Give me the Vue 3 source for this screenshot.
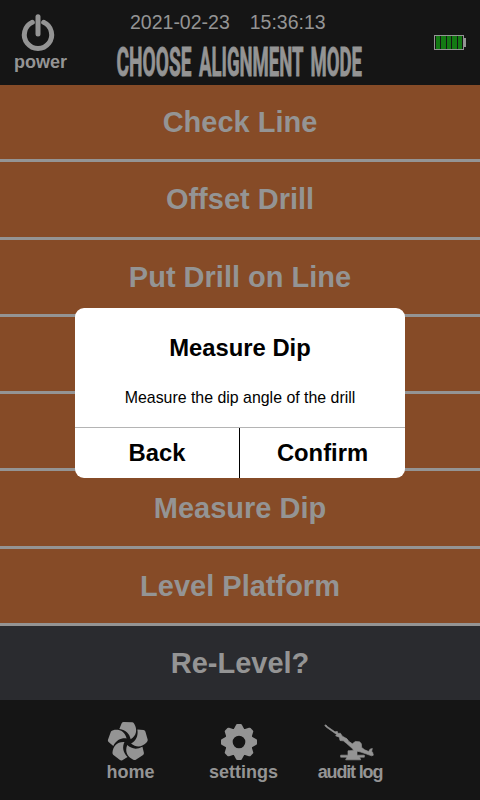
<script setup>
const modes = [
  { id: 1, label: 'Check Line' },
  { id: 2, label: 'Offset Drill' },
  { id: 3, label: 'Put Drill on Line' },
  { id: 4, label: '' },
  { id: 5, label: '' },
  { id: 6, label: 'Measure Dip' },
  { id: 7, label: 'Level Platform' },
  { id: 8, label: 'Re-Level?', dark: true },
]
const petals = [0, 72, 144, 216, 288]
const teeth = [0, 45, 90, 135, 180, 225, 270, 315]
</script>

<template>
  <div class="screen">
    <header class="header">
      <button class="power">
        <svg class="power-icon" viewBox="0 0 96 108">
          <path d="M31 25 A41 41 0 1 0 65 25" />
          <path d="M48 8 V60" />
        </svg>
        <span>power</span>
      </button>
      <div class="heading">
        <div class="clock"><span>2021-02-23</span><span>15:36:13</span></div>
        <svg class="title" viewBox="0 0 250 34">
          <text x="0.5" y="31" textLength="75" lengthAdjust="spacingAndGlyphs">CHOOSE</text>
          <text x="83" y="31" textLength="104.5" lengthAdjust="spacingAndGlyphs">ALIGNMENT</text>
          <text x="194.5" y="31" textLength="51.5" lengthAdjust="spacingAndGlyphs">MODE</text>
        </svg>
      </div>
      <div class="battery">
        <div class="cells"><i v-for="n in 5" :key="n"></i></div>
        <div class="nub"></div>
      </div>
    </header>

    <main class="modes">
      <button v-for="mode in modes" :key="mode.id" class="mode" :class="{ dark: mode.dark }">{{ mode.label }}</button>
    </main>

    <footer class="footer">
      <button class="nav home">
        <svg viewBox="50 33 126 120">
          <path
            v-for="a in petals"
            :key="a"
            :transform="`rotate(${a} 113 95)`"
            d="M87 57 L94 40 Q96 36 100 36 L126 37 Q130 38 132 42 C141 58 140 76 121 88 C118 72 107 60 87 57Z"
          />
        </svg>
        <span>home</span>
      </button>
      <button class="nav settings">
        <svg viewBox="-57 -57 114 114">
          <path fill-rule="evenodd" d="M0-42A42 42 0 1 1 0 42A42 42 0 1 1 0-42ZM0-19A19 19 0 1 0 0 19A19 19 0 1 0 0-19Z" />
          <path v-for="a in teeth" :key="a" :transform="`rotate(${a})`" d="M-17-36 L-9-51 Q-8-54-5-54 H5 Q8-54 9-51 L17-36Z" />
        </svg>
        <span>settings</span>
      </button>
      <button class="nav audit">
        <svg viewBox="58 42 150 110">
          <path d="M60 46 L64 44 L68 49 L91 65 L98 64 L100 70 L107 69 L113 78 L127 86 L132 93 L143 101 L152 94 L165 95 L170 101 L171 112 L180 119 L192 124 L196 117 L203 115 L201 123 L204 127 L206 135 L201 137 L184 131 L166 125 L157 123 L157 135 L179 135 L179 141 L165 141 L168 149 L123 149 L127 141 L108 141 L108 135 L130 135 L130 122 L147 121 L143 115 L126 100 L116 92 L106 91 L104 81 L93 77 L96 73 L65 51Z" />
        </svg>
        <span>audit log</span>
      </button>
    </footer>

    <div class="overlay">
      <section class="dialog">
        <h2>Measure Dip</h2>
        <p>Measure the dip angle of the drill</p>
        <div class="actions">
          <button>Back</button>
          <button>Confirm</button>
        </div>
      </section>
    </div>
  </div>
</template>

<style>
body {
  background: #151515;
}
</style>

<style scoped>
.screen {
  position: relative;
  width: 480px;
  height: 800px;
  display: grid;
  grid-template-rows: 85px 615px 100px;
  background: #151515;
  color: #949494;
  font-family: 'Liberation Sans', Arial, sans-serif;
  overflow: hidden;
}
button {
  border: 0;
  margin: 0;
  padding: 0;
  background: none;
  color: inherit;
  font: inherit;
}
.header {
  display: grid;
  grid-template-columns: 80px 1fr 80px;
}
.power {
  display: flex;
  flex-direction: column;
  align-items: center;
  padding: 14px 0 0 1px;
  font: bold 18px/20px 'Liberation Sans', sans-serif;
}
.power-icon {
  width: 32px;
  height: 36px;
  margin: 0 5px 2px 0;
  fill: none;
  stroke: #949494;
  stroke-width: 15;
  stroke-linecap: round;
  overflow: visible;
}
.heading {
  display: flex;
  flex-direction: column;
  padding-top: 11px;
}
.clock {
  display: flex;
  gap: 20px;
  padding-left: 50px;
  font-size: 19.5px;
  line-height: 22px;
}
.title {
  width: 250px;
  height: 34px;
  margin: 12px 0 0 36px;
  overflow: visible;
  fill: #949494;
  stroke: #949494;
  stroke-width: 0.9px;
  font: bold 40px Roboto, sans-serif;
}
.battery {
  display: flex;
  align-items: center;
  align-self: start;
  margin: 35px 0 0 34px;
}
.cells {
  display: flex;
  gap: 1px;
  width: 30px;
  height: 15px;
  box-sizing: border-box;
  border: 1px solid #949494;
  padding: 0 1px;
}
.cells i {
  flex: 1;
  background: #137a13;
}
.nub {
  width: 2px;
  height: 9px;
  background: #949494;
}
.modes {
  display: grid;
  grid-template-rows: repeat(8, 1fr);
  gap: 3px;
  background: #949494;
}
.mode {
  padding-top: 1px;
  background: #864b27;
  font-size: 29px;
  font-weight: bold;
}
.mode.dark {
  background: #2a2b2f;
}
.footer {
  display: flex;
  padding: 21px 0 0 106px;
}
.nav {
  display: flex;
  flex-direction: column;
  align-items: center;
  font: bold 18px/20px 'Liberation Sans', sans-serif;
}
.nav svg {
  height: 40px;
  fill: #949494;
}
.nav span {
  margin-top: 1px;
}
.home {
  width: 49px;
}
.home svg {
  width: 42px;
  margin-right: 6px;
}
.settings {
  width: 69px;
  margin-left: 54px;
}
.settings svg {
  width: 38px;
  margin: 1px 9px -1px 0;
}
.audit {
  width: 66px;
  margin-left: 39px;
}
.audit svg {
  width: 50px;
  height: 37px;
  margin: 3px 2px 0 0;
  stroke: #949494;
  stroke-width: 2;
}
.audit span {
  letter-spacing: -1.15px;
  white-space: nowrap;
}
.overlay {
  position: absolute;
  inset: 0;
  display: flex;
  justify-content: center;
  align-items: flex-start;
  padding-top: 307.5px;
}
.dialog {
  width: 330px;
  height: 170px;
  display: flex;
  flex-direction: column;
  border-radius: 9px;
  overflow: hidden;
  background: #fff;
  color: #000;
  text-align: center;
}
h2 {
  margin: 26.5px 0 0;
  font-size: 23.8px;
  line-height: 28px;
}
p {
  margin: 27px 0 0;
  font-size: 15.9px;
  line-height: 18px;
}
.actions {
  flex: none;
  display: grid;
  grid-template-columns: 165px 165px;
  height: 51px;
  margin-top: auto;
  border-top: 1px solid #b4b4b4;
  box-sizing: border-box;
}
.actions button {
  font-size: 23.8px;
  font-weight: bold;
}
.actions button:first-child {
  border-right: 1px solid #000;
}
</style>
